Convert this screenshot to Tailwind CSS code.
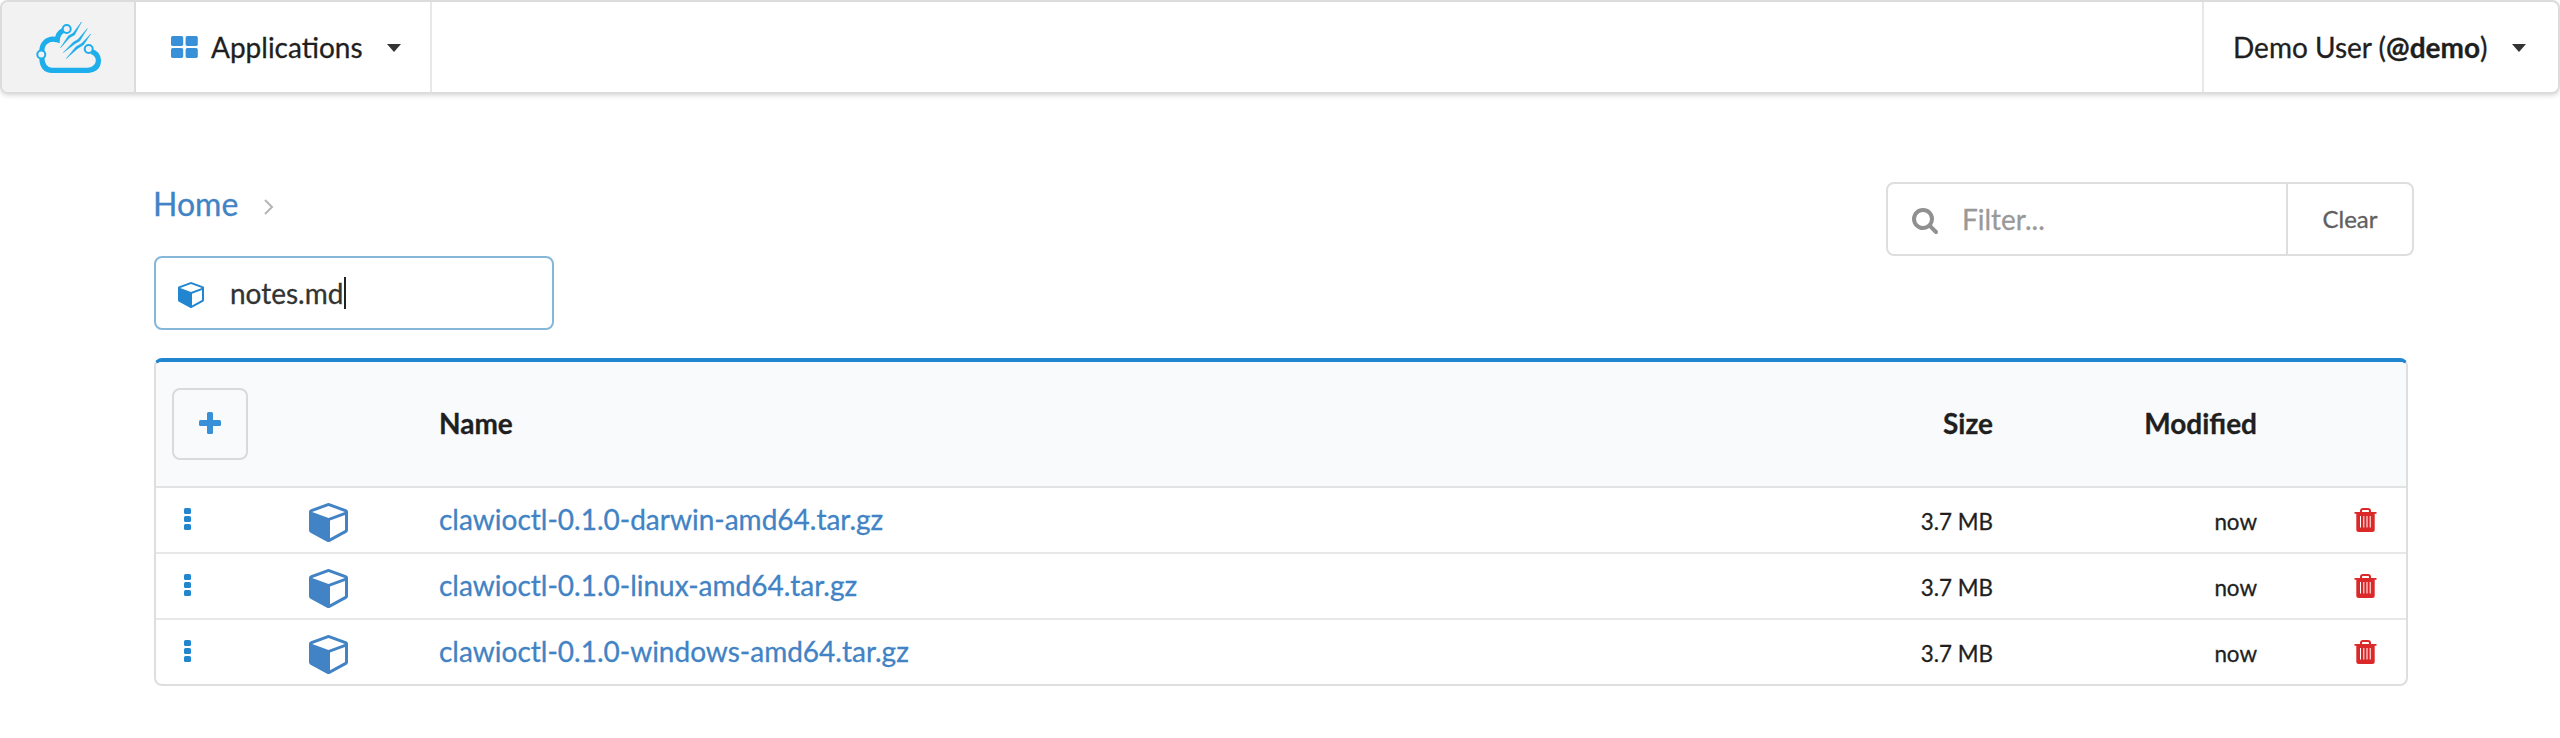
<!DOCTYPE html>
<html lang="en">
<head>
<meta charset="utf-8">
<title>Files</title>
<script src="https://cdn.jsdelivr.net/npm/@tailwindcss/browser@4"></script>
</head>
<body class="bg-white font-[Lato,sans-serif] text-[28px] leading-[34px] text-[#1f1f1f] [-webkit-text-stroke:0.3px]">
<svg class="hidden">
  <symbol id="cube" viewBox="0 128 1664 1664"><path d="M896 1629l640-349v-636l-640 233v752zM832 764l698-254-698-254-698 254 698 254zM1664 512v768q0 35-18 65t-49 47l-704 384q-28 16-61 16t-61-16l-704-384q-31-17-49-47t-18-65v-768q0-40 23-73t61-47l704-256q22-8 44-8t44 8l704 256q38 14 61 47t23 73z" fill-rule="evenodd"/></symbol>
  <symbol id="dots" viewBox="0 0 7 22"><rect width="7" height="6" rx="1.6"/><rect y="8" width="7" height="6" rx="1.6"/><rect y="16" width="7" height="6" rx="1.6"/></symbol>
  <symbol id="trash" viewBox="0 0 22 24"><path fill-rule="evenodd" d="M5.500 4V3Q5.500 0 8.500 0h5Q16.500 0 16.500 3V4H22V5.700H20.200V21.500Q20.200 24 17.700 24H4.300Q1.800 24 1.800 21.500V5.700H0V4zM7.500 4h7V3Q14.500 2 13.500 2h-5Q7.500 2 7.500 3zM5.500 8V19.500H6.500V8zM8.800 8V19.500H9.800V8zM12 8V19.500H13V8zM15.200 8V19.500H16.200V8z"/></symbol>
</svg>

<header class="flex h-[94px] rounded-lg border-2 border-[#dcdcdc] bg-white shadow-[0_2px_4px_rgba(34,36,38,0.15)]">
  <div class="flex w-[134px] items-center justify-center rounded-l-md border-r-2 border-[#dcdcdc] bg-[#f2f2f2]">
    <svg class="h-[54px] w-[68px]" viewBox="34 19 68 54" fill="none" stroke="#1eaeeb">
      <path stroke-width="5.200" d="M63 29.500Q58 32 57.300 38.800Q50.500 36.500 45.500 41Q41.500 45 42 50M41.800 57Q42.500 69.300 52 69.300H88Q98 68.500 98.500 59.500Q98 52.500 91.500 50.500"/>
      <g stroke-width="2" fill="#f2f2f2"><circle cx="66.700" cy="28" r="4"/><circle cx="41.300" cy="53.500" r="4"/><circle cx="88.700" cy="48" r="4"/></g>
      <path fill="#1eaeeb" stroke-width=".5" d="M81.500 21L74.500 34L69.800 36.400L60.500 46.800L68.500 34.800L73 32.300zM87.300 27.500L79.700 40L75 42.700L63.300 51.500L73.500 41L78 38.500zM90.700 33L83.500 43.800L77.700 47.400L66.300 57.500L76 45.700L81.700 42.400z"/>
    </svg>
  </div>
  <div class="flex w-[296px] items-center border-r-2 border-[#e8e8e8] pl-[35px]">
    <svg class="h-[22px] w-[27px]" viewBox="0 0 27 22" fill="#3790d8"><rect width="12.200" height="10" rx="1.700"/><rect x="14.600" width="12.200" height="10" rx="1.700"/><rect y="12" width="12.200" height="10" rx="1.700"/><rect x="14.600" y="12" width="12.200" height="10" rx="1.700"/></svg>
    <span class="ml-[13px] w-[176px]">Applications</span>
    <svg class="h-2 w-[14px] mt-[2px]" viewBox="0 0 14 8" fill="#333"><path d="M0 0h14L7 8z"/></svg>
  </div>
  <div class="ml-auto flex w-[356px] items-center border-l-2 border-[#e8e8e8] pl-[29px]">
    <span class="w-[279px]">Demo User (<b>@demo</b>)</span>
    <svg class="h-2 w-[14px] mt-[2px]" viewBox="0 0 14 8" fill="#333"><path d="M0 0h14L7 8z"/></svg>
  </div>
</header>

<main class="pl-[154px] pr-[146px] pt-[88px]">
  <div class="flex justify-between">
    <div>
      <nav class="flex h-[74px] items-start text-[32px] leading-[38px] text-[#4183c4]">
        <a class="-ml-px mt-[3px] w-[111px]">Home</a>
        <svg class="mt-[17px] h-4 w-[10px]" viewBox="0 0 10 16" fill="none" stroke="#b5b5b5" stroke-width="2"><path d="M1 1l7 7-7 7"/></svg>
      </nav>
      <div class="flex h-[74px] w-[400px] items-center rounded-lg border-2 border-[#85b7d9] pl-[22px]">
        <svg class="h-[26px] w-[26px] mt-[3px]" fill="#2185d0"><use href="#cube"/></svg>
        <span class="ml-[26px] text-[#333]">notes.md</span><i class="ml-px h-8 w-[2px] bg-[#222]"></i>
      </div>
    </div>
    <div class="flex h-[74px] w-[528px] rounded-lg border-2 border-[#dedede]">
      <div class="flex w-[400px] items-center border-r-2 border-[#dedede] pl-6">
        <svg class="h-[26px] w-[26px] mt-[3px]" viewBox="0 0 1664 1664" fill="#909090"><path d="M1152 704q0-185-131.500-316.500t-316.500-131.500-316.500 131.500-131.500 316.500 131.500 316.500 316.500 131.500 316.500-131.500 131.500-316.500zm512 832q0 52-38 90t-90 38q-54 0-90-38l-343-342q-179 124-399 124-143 0-273.500-55.500t-225-150-150-225-55.500-273.500 55.500-273.500 150-225 225-150 273.500-55.500 273.500 55.500 225 150 150 225 55.500 273.500q0 220-124 399l343 343q37 37 37 90z"/></svg>
        <span class="ml-[24px] text-[#999]">Filter...</span>
      </div>
      <div class="flex flex-1 items-center justify-center text-[24px] text-[#606060]">Clear</div>
    </div>
  </div>

  <section class="mt-7 h-[328px] w-[2254px] overflow-hidden rounded-lg border-2 border-t-4 border-[#dedede] border-t-[#2185d0]">
    <div class="flex h-[126px] items-center border-b-2 border-[#e2e4e4] bg-[#f9fafb] pl-4 font-bold">
      <div class="flex h-[72px] w-[76px] items-center justify-center rounded-lg border-2 border-[#d9dadb]"><svg class="h-[22px] w-[22px] mb-[3px]" viewBox="0 0 22 22" fill="#3790d8"><rect x="8" width="6" height="22" rx="1.500"/><rect y="8" width="22" height="6" rx="1.500"/></svg></div>
      <span class="-mt-[2px] ml-[191px]">Name</span>
      <span class="-mt-[2px] ml-auto w-[200px] text-right">Size</span>
      <span class="-mt-[2px] mr-[149px] w-[264px] text-right">Modified</span>
    </div>
    <div class="flex h-[66px] items-center border-b-2 border-[#e8e8e8]">
      <svg class="ml-7 h-[22px] w-[7px] mb-[2px]" fill="#2185d0"><use href="#dots"/></svg>
      <svg class="ml-[118px] mt-[5px] h-[39px] w-[39px]" fill="#4183c4"><use href="#cube"/></svg>
      <a class="-mt-[2px] ml-[91px] text-[#4183c4]">clawioctl-0.1.0-darwin-amd64.tar.gz</a>
      <span class="ml-auto mt-1 w-[200px] text-right text-[22.400px]">3.7 MB</span>
      <span class="mt-1 w-[264px] text-right text-[22.400px]">now</span>
      <svg class="ml-[97px] mr-[29px] h-6 w-[23px]" fill="#db2828"><use href="#trash"/></svg>
    </div>
    <div class="flex h-[66px] items-center border-b-2 border-[#e8e8e8]">
      <svg class="ml-7 h-[22px] w-[7px] mb-[2px]" fill="#2185d0"><use href="#dots"/></svg>
      <svg class="ml-[118px] mt-[5px] h-[39px] w-[39px]" fill="#4183c4"><use href="#cube"/></svg>
      <a class="-mt-[2px] ml-[91px] text-[#4183c4]">clawioctl-0.1.0-linux-amd64.tar.gz</a>
      <span class="ml-auto mt-1 w-[200px] text-right text-[22.400px]">3.7 MB</span>
      <span class="mt-1 w-[264px] text-right text-[22.400px]">now</span>
      <svg class="ml-[97px] mr-[29px] h-6 w-[23px]" fill="#db2828"><use href="#trash"/></svg>
    </div>
    <div class="flex h-[64px] items-center">
      <svg class="ml-7 h-[22px] w-[7px] mb-[2px]" fill="#2185d0"><use href="#dots"/></svg>
      <svg class="ml-[118px] mt-[5px] h-[39px] w-[39px]" fill="#4183c4"><use href="#cube"/></svg>
      <a class="-mt-[2px] ml-[91px] text-[#4183c4]">clawioctl-0.1.0-windows-amd64.tar.gz</a>
      <span class="ml-auto mt-1 w-[200px] text-right text-[22.400px]">3.7 MB</span>
      <span class="mt-1 w-[264px] text-right text-[22.400px]">now</span>
      <svg class="ml-[97px] mr-[29px] h-6 w-[23px]" fill="#db2828"><use href="#trash"/></svg>
    </div>
  </section>
</main>
</body>
</html>
